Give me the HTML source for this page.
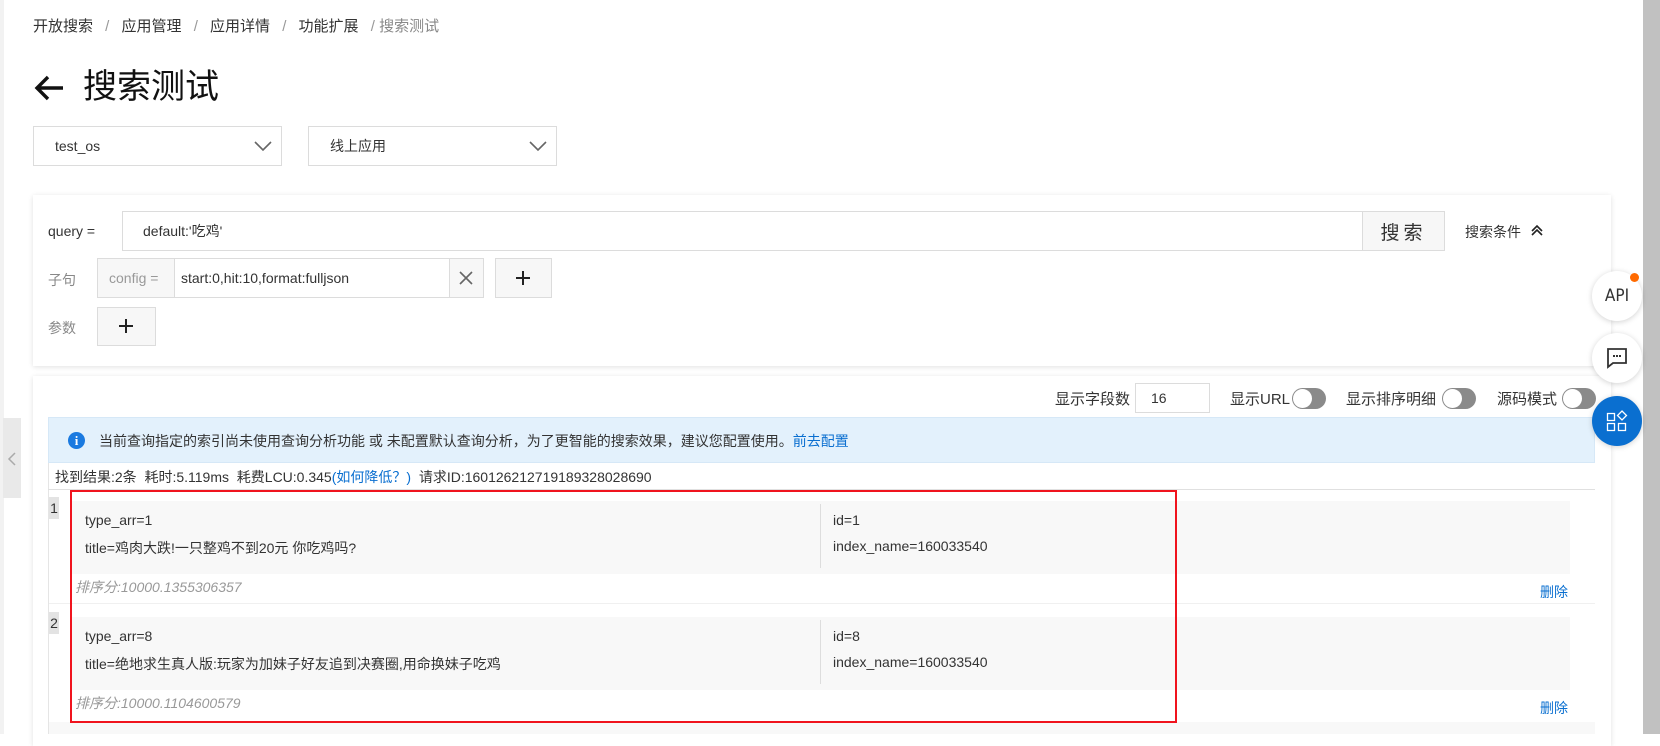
<!DOCTYPE html>
<html><head><meta charset="utf-8"><style>
*{box-sizing:border-box;margin:0;padding:0}
body{width:1660px;height:734px;overflow:hidden;background:#fff;font-family:"Liberation Sans","Noto Sans CJK SC",sans-serif;color:#333;font-size:14px;position:relative}
.a{position:absolute;white-space:nowrap}
.box{position:absolute;border:1px solid #dcdcdc;background:#fff}
.vc{display:flex;align-items:center}
.tg{position:absolute;width:34px;height:21px;border-radius:11px;background:#8a8a8a}
.tg:after{content:"";position:absolute;left:1px;top:1px;width:19px;height:19px;border-radius:50%;background:#fff}
.fb{position:absolute;left:1592px;width:50px;height:50px;border-radius:50%;background:#fff;box-shadow:0 1px 6px rgba(0,0,0,.18);display:flex;align-items:center;justify-content:center}
</style></head><body>
<div class="a" style="left:0;top:0;width:4px;height:734px;background:#f2f2f2"></div>
<div class="a" style="left:3px;top:418px;width:18px;height:80px;background:#e9e9e9"></div>
<svg class="a" style="left:7px;top:452px" width="10" height="14"><path d="M8 1L2 7l6 6" fill="none" stroke="#aaa" stroke-width="1.5"/></svg>
<div class="a" style="left:1643px;top:0;width:17px;height:734px;background:#c1c1c1"></div>

<div class="a" style="left:33px;top:15px;font-size:15px;color:#333">开放搜索 <span style="color:#999;margin:0 8px">/</span> 应用管理 <span style="color:#999;margin:0 8px">/</span> 应用详情 <span style="color:#999;margin:0 8px">/</span> 功能扩展 <span style="color:#999;margin:0 0 0 8px">/</span> <span style="color:#888">搜索测试</span></div>
<svg class="a" style="left:33px;top:74px" width="32" height="28"><path d="M30 14H4M15 3L4 14l11 11" fill="none" stroke="#111" stroke-width="3.4"/></svg>
<div class="a" style="left:83px;top:66px;font-size:34px;color:#111;line-height:42px">搜索测试</div>

<div class="box vc" style="left:33px;top:126px;width:249px;height:40px;padding-left:21px;font-size:14px">test_os</div>
<svg class="a" style="left:254px;top:140px" width="18" height="12"><path d="M1 2l8 8 8-8" fill="none" stroke="#666" stroke-width="1.6"/></svg>
<div class="box vc" style="left:308px;top:126px;width:249px;height:40px;padding-left:21px;font-size:14px">线上应用</div>
<svg class="a" style="left:529px;top:140px" width="18" height="12"><path d="M1 2l8 8 8-8" fill="none" stroke="#666" stroke-width="1.6"/></svg>

<div class="a" style="left:33px;top:195px;width:1578px;height:171px;background:#fff;box-shadow:0 1px 5px rgba(0,0,0,.12)"></div>
<div class="a" style="left:48px;top:223px;font-size:14px">query =</div>
<div class="box vc" style="left:122px;top:211px;width:1241px;height:40px;padding-left:20px;font-size:14px">default:'吃鸡'</div>
<div class="box vc" style="left:1362px;top:211px;width:83px;height:40px;background:#f7f7f7;justify-content:center;font-size:19px;letter-spacing:4px">搜索</div>
<div class="a" style="left:1465px;top:222px;font-size:14px">搜索条件</div>
<svg class="a" style="left:1530px;top:223px" width="14" height="14"><path d="M2 8l5-5 5 5M2 12l5-5 5 5" fill="none" stroke="#222" stroke-width="1.6"/></svg>

<div class="a" style="left:48px;top:270px;font-size:14px;color:#888">子句</div>
<div class="box" style="left:97px;top:258px;width:387px;height:40px"></div>
<div class="a vc" style="left:98px;top:259px;width:77px;height:38px;background:#f7f7f7;border-right:1px solid #dcdcdc;padding-left:11px;color:#999;font-size:14px">config =</div>
<div class="a" style="left:181px;top:270px;font-size:14px">start:0,hit:10,format:fulljson</div>
<div class="a" style="left:449px;top:259px;width:34px;height:38px;background:#f7f7f7;border-left:1px solid #dcdcdc"></div>
<svg class="a" style="left:458px;top:270px" width="16" height="16"><path d="M2 2l12 12M14 2L2 14" stroke="#666" stroke-width="1.6"/></svg>
<div class="box" style="left:495px;top:258px;width:57px;height:40px;background:#f7f7f7"></div>
<svg class="a" style="left:515px;top:270px" width="16" height="16"><path d="M8 1v14M1 8h14" stroke="#222" stroke-width="2"/></svg>
<div class="a" style="left:48px;top:318px;font-size:14px;color:#888">参数</div>
<div class="box" style="left:97px;top:307px;width:59px;height:39px;background:#f7f7f7"></div>
<svg class="a" style="left:118px;top:318px" width="16" height="16"><path d="M8 1v14M1 8h14" stroke="#222" stroke-width="2"/></svg>

<div class="a" style="left:33px;top:376px;width:1578px;height:370px;background:#fff;box-shadow:0 1px 5px rgba(0,0,0,.12)"></div>
<div class="a" style="left:1055px;top:388px;font-size:15px">显示字段数</div>
<div class="box vc" style="left:1135px;top:383px;width:75px;height:30px;padding-left:15px;font-size:14px">16</div>
<div class="a" style="left:1230px;top:388px;font-size:15px">显示URL</div>
<div class="tg" style="left:1292px;top:388px"></div>
<div class="a" style="left:1346px;top:388px;font-size:15px">显示排序明细</div>
<div class="tg" style="left:1442px;top:388px"></div>
<div class="a" style="left:1497px;top:388px;font-size:15px">源码模式</div>
<div class="tg" style="left:1562px;top:388px"></div>

<div class="a" style="left:48px;top:417px;width:1547px;height:46px;background:#e3f1fc;border:1px solid #d6e8f7"></div>
<div class="a" style="left:68px;top:432px;width:17px;height:17px;border-radius:50%;background:#1a7ae0;color:#fff;font-weight:bold;font-size:13px;text-align:center;line-height:17px;font-family:'Liberation Serif',serif">i</div>
<div class="a" style="left:99px;top:431px;font-size:14px">当前查询指定的索引尚未使用查询分析功能 或 未配置默认查询分析，为了更智能的搜索效果，建议您配置使用。<span style="color:#0a6fd0">前去配置</span></div>
<div class="a" style="left:48px;top:463px;width:1px;height:271px;background:#e5e5e5"></div>
<div class="a" style="left:55px;top:467px;font-size:14px">找到结果:2条&nbsp;&nbsp;耗时:5.119ms&nbsp;&nbsp;耗费LCU:0.345<span style="color:#0a6fd0">(如何降低？)</span>&nbsp;&nbsp;请求ID:160126212719189328028690</div>
<div class="a" style="left:48px;top:489px;width:1547px;height:1px;background:#e0e0e0"></div>

<div class="a" style="left:49px;top:497px;width:10px;height:22px;background:#e3e3e3;font-size:14px;line-height:22px;text-align:center">1</div>
<div class="a" style="left:71px;top:501px;width:1499px;height:73px;background:#f8f8f8"></div>
<div class="a" style="left:820px;top:504px;width:1px;height:64px;background:#ddd"></div>
<div class="a" style="left:85px;top:512px">type_arr=1</div>
<div class="a" style="left:85px;top:538px">title=鸡肉大跌!一只整鸡不到20元 你吃鸡吗?</div>
<div class="a" style="left:833px;top:512px">id=1</div>
<div class="a" style="left:833px;top:538px">index_name=160033540</div>
<div class="a" style="left:75px;top:577px;color:#999;font-style:italic">排序分:10000.1355306357</div>
<div class="a" style="left:1540px;top:582px;color:#0a6fd0">删除</div>
<div class="a" style="left:49px;top:603px;width:1546px;height:1px;background:#f0f0f0"></div>

<div class="a" style="left:49px;top:612px;width:10px;height:22px;background:#e3e3e3;font-size:14px;line-height:22px;text-align:center">2</div>
<div class="a" style="left:71px;top:617px;width:1499px;height:73px;background:#f8f8f8"></div>
<div class="a" style="left:820px;top:620px;width:1px;height:64px;background:#ddd"></div>
<div class="a" style="left:85px;top:628px">type_arr=8</div>
<div class="a" style="left:85px;top:654px">title=绝地求生真人版:玩家为加妹子好友追到决赛圈,用命换妹子吃鸡</div>
<div class="a" style="left:833px;top:628px">id=8</div>
<div class="a" style="left:833px;top:654px">index_name=160033540</div>
<div class="a" style="left:75px;top:693px;color:#999;font-style:italic">排序分:10000.1104600579</div>
<div class="a" style="left:1540px;top:698px;color:#0a6fd0">删除</div>
<div class="a" style="left:49px;top:722px;width:1546px;height:12px;background:#f8f8f8"></div>

<div class="a" style="left:70px;top:490px;width:1107px;height:233px;border:2px solid #f0141e"></div>

<div class="fb" style="top:271px;font-family:'DejaVu Sans Condensed','Liberation Sans',sans-serif;font-size:17px;color:#333">API</div>
<div class="a" style="left:1630px;top:273px;width:9px;height:9px;border-radius:50%;background:#ff6a00"></div>
<div class="fb" style="top:333px"><svg width="22" height="22"><path d="M2 2h18v14H7l-5 4z" fill="none" stroke="#333" stroke-width="1.8"/><path d="M7 9h2M10 9h2M13 9h2" stroke="#333" stroke-width="2"/></svg></div>
<div class="fb" style="top:396px;background:#0a6fd0"><svg width="22" height="22"><path d="M1.5 3.5h7v7h-7zM1.5 13.5h7v7h-7zM12.5 13.5h7v7h-7z" fill="none" stroke="#fff" stroke-width="1.3"/><path d="M16 1l4.5 4.5L16 10l-4.5-4.5z" fill="none" stroke="#fff" stroke-width="1.3"/></svg></div>
</body></html>
